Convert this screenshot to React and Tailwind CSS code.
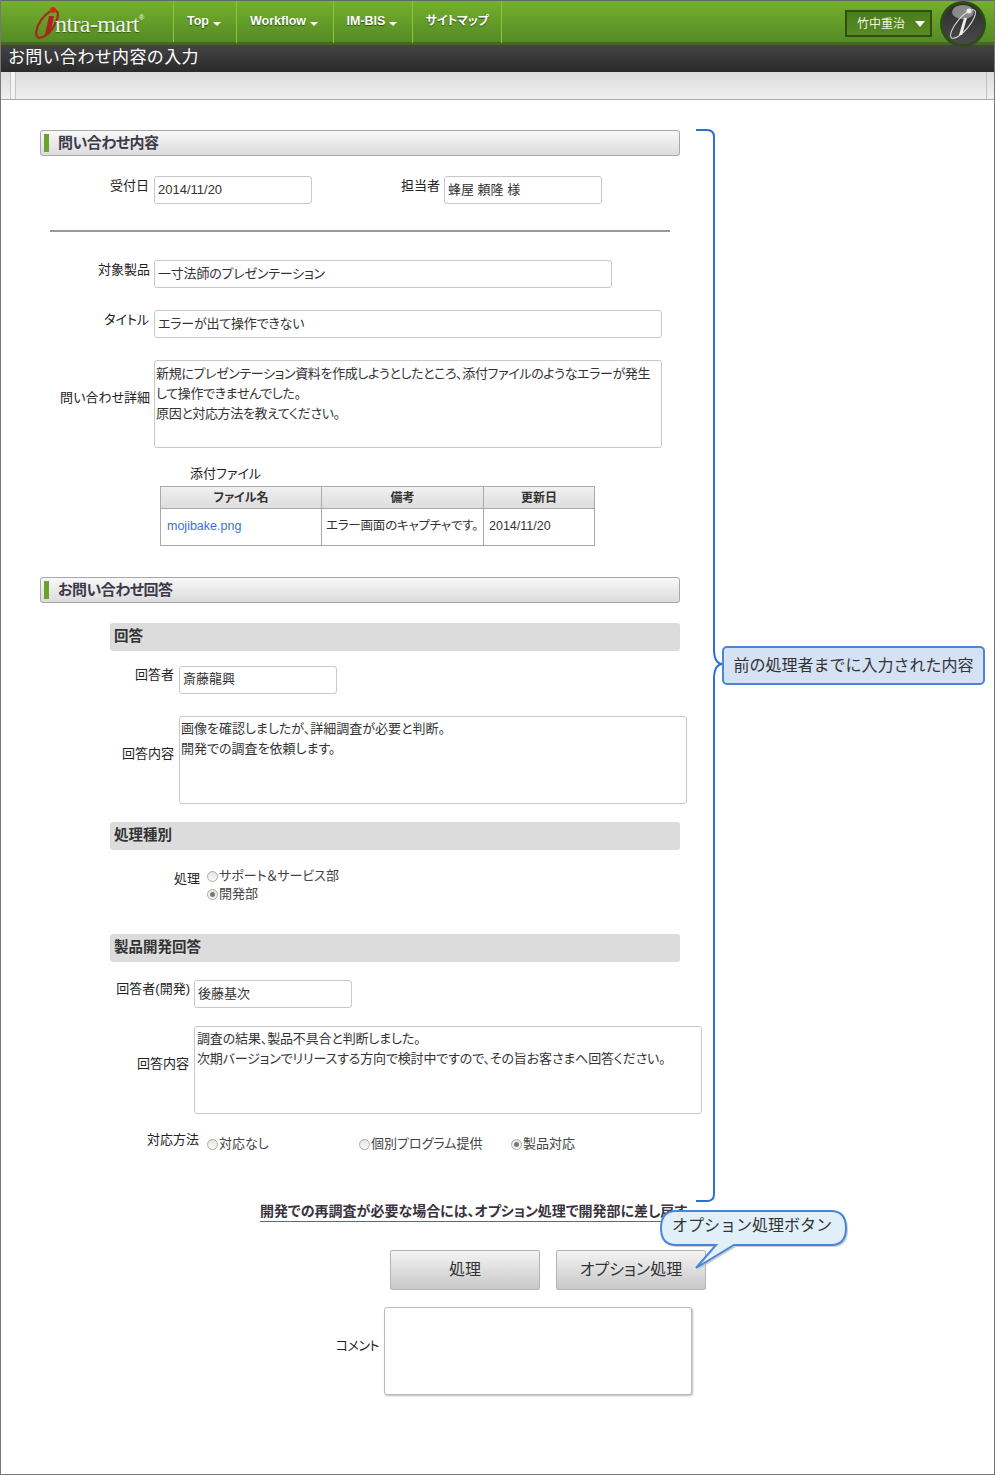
const jp = { fontFamily: '"Liberation Sans","Noto Sans CJK JP",sans-serif' };

function Field({ className = "", children }) {
  return (
    <div className={"border border-[#c8c8c8] rounded-[3px] bg-white text-[13px] leading-[20px] text-[#333] " + className}>
      {children}
    </div>
  );
}

function SectionHead({ className = "", children }) {
  return (
    <div className={"ml-[39px] w-[640px] h-[26px] flex items-center border border-[#a8a8a8] rounded-[3px] bg-linear-to-b from-[#f8f8f8] to-[#dcdcdc] " + className}>
      <span className="ml-[3px] w-[5px] h-[18px] bg-[#6aa32a]" />
      <span className="ml-[9px] text-[15px] font-bold text-[#3a3a4a] tracking-[-0.5px]">{children}</span>
    </div>
  );
}

function SubHead({ className = "", children }) {
  return (
    <div className={"ml-[109px] w-[570px] h-[28px] flex items-center pl-[4px] rounded-[3px] bg-[#dcdcdc] text-[14.5px] font-bold text-[#333] " + className}>
      {children}
    </div>
  );
}

function Label({ className = "", children }) {
  return <div className={"text-right text-[13px] leading-[18px] text-[#222] shrink-0 " + className}>{children}</div>;
}

function Radio({ on }) {
  return (
    <span className="inline-flex items-center justify-center w-[11px] h-[11px] rounded-full border border-[#aaa] bg-linear-to-b from-[#e4e4e4] to-[#fafafa] shrink-0">
      {on && <span className="w-[5px] h-[5px] rounded-full bg-[#777]" />}
    </span>
  );
}

function Nav({ w, children, caret = true }) {
  return (
    <div className={"h-[42px] border-r border-[#8cc63f] flex items-start justify-center pt-[13px] pr-[2px] gap-[4px] text-[12.5px] font-bold text-white [text-shadow:0_1px_1px_#2d4a10] " + w}>
      <span className="leading-[15px]">{children}</span>
      {caret && <span className="mt-[8px] w-0 h-0 border-x-[4px] border-x-transparent border-t-[4px] border-t-white" />}
    </div>
  );
}

export default function App() {
  return (
    <div style={jp} className="relative w-[995px] h-[1475px] bg-white overflow-hidden border-x border-b border-[#777] box-border [font-feature-settings:'palt']">
      {/* header */}
      <div className="h-[42px] flex border-t border-[#666] bg-linear-to-b from-[#74b12e] to-[#558a25] -mx-px">
        <div className="relative w-[174px] h-[41px] border-r border-[#8cc63f] shrink-0">
          <svg className="absolute left-[30px] top-[4px]" width="34" height="36" viewBox="0 0 34 36">
            <ellipse cx="17" cy="19" rx="7" ry="16" transform="rotate(35 17 19)" fill="none" stroke="#a8261c" strokeWidth="2.2" />
            <circle cx="23" cy="5" r="3" fill="#d8261c" />
            <path d="M19 11 L15 29 L20 29 L24 11Z" fill="#a8261c" />
          </svg>
          <span className="absolute left-[55px] top-[9px] text-[24px] leading-[28px] text-[#eef2e6] tracking-[-0.6px] [text-shadow:0_1px_1px_#3c5c18]" style={{ fontFamily: '"Liberation Serif",serif' }}>ntra-mart</span>
          <span className="absolute left-[139px] top-[13px] text-[7px] leading-[8px] text-white">®</span>
        </div>
        <Nav w="w-[63px]">Top</Nav>
        <Nav w="w-[97px]">Workflow</Nav>
        <Nav w="w-[79px]">IM-BIS</Nav>
        <Nav w="w-[89px]" caret={false}><span className="text-[12px] tracking-[-0.3px] ml-[2px]">サイトマップ</span></Nav>
        <div className="flex-1" />
        <div className="mt-[9px] mr-[8px] w-[87px] h-[27px] flex items-center justify-end pr-[5px] gap-[10px] border-2 border-[#2f4f10] bg-linear-to-b from-[#4b7d1c] to-[#578a22] text-[12px] text-[#eef5e4]">
          <span>竹中重治</span>
          <span className="w-0 h-0 border-x-[5px] border-x-transparent border-t-[6px] border-t-white" />
        </div>
        <svg className="mr-[9px] mt-0 relative z-10" width="46" height="46" viewBox="0 0 46 46">
          <defs>
            <linearGradient id="ball" x1="0" y1="0" x2="0" y2="1">
              <stop offset="0" stopColor="#2b2b2b" />
              <stop offset="1" stopColor="#4a4a4a" />
            </linearGradient>
          </defs>
          <circle cx="23" cy="23" r="23" fill="#2f4a1a" />
          <circle cx="23" cy="23" r="20" fill="url(#ball)" />
          <ellipse cx="23" cy="11" rx="11" ry="7" fill="#8a8a8a" />
          <ellipse cx="23" cy="23" rx="6" ry="18" transform="rotate(40 23 23)" fill="none" stroke="#ddd" strokeWidth="1" />
          <path d="M24 17 L19 34 L22 34 L27 17Z" fill="#eee" />
          <circle cx="29" cy="10" r="2.5" fill="#eee" />
        </svg>
      </div>
      <div className="h-[3px] bg-[#44691f] -mx-px" />
      <div className="h-[27px] pl-[8px] -mx-px bg-linear-to-b from-[#444] to-[#2a2a2a] text-[17px] leading-[25px] text-white tracking-[0.35px] [font-feature-settings:normal]">お問い合わせ内容の入力</div>
      <div className="h-[28px] -mx-px flex justify-between border-b border-[#aaa] bg-linear-to-b from-[#dcdcdc] to-[#f0f0f0]">
        <div className="ml-[10px] w-[6px] border-x border-[#c4c4c4] bg-[#f4f4f4]" />
        <div className="mr-[8px] w-px bg-[#c0c0c0]" />
      </div>

      {/* form */}
      <SectionHead className="mt-[30px]">問い合わせ内容</SectionHead>

      <div className="mt-[20px] flex">
        <Label className="w-[148px] mt-[1px]">受付日</Label>
        <Field className="ml-[5px] w-[158px] h-[28px] pt-[3px] px-[3px]">2014/11/20</Field>
        <Label className="w-[128px] mt-[1px]">担当者</Label>
        <Field className="ml-[4px] w-[158px] h-[28px] pt-[3px] px-[3px]">蜂屋 頼隆 様</Field>
      </div>
      <div className="mt-[26px] ml-[49px] w-[620px] h-[2px] bg-[#999]" />

      <div className="mt-[28px] flex">
        <Label className="w-[149px] mt-[1px]">対象製品</Label>
        <Field className="ml-[4px] w-[458px] h-[28px] pt-[3px] px-[3px] tracking-[-0.2px]">一寸法師のプレゼンテーション</Field>
      </div>
      <div className="mt-[22px] flex">
        <Label className="w-[148px] mt-[1px]">タイトル</Label>
        <Field className="ml-[5px] w-[508px] h-[28px] pt-[3px] px-[3px] tracking-[-0.2px]">エラーが出て操作できない</Field>
      </div>
      <div className="mt-[22px] flex items-center">
        <Label className="w-[149px] -mt-[13px]">問い合わせ詳細</Label>
        <Field className="ml-[4px] w-[508px] h-[88px] pt-[3px] px-[1px] whitespace-nowrap tracking-[-0.37px]">
          新規にプレゼンテーション資料を作成しようとしたところ、添付ファイルのようなエラーが発生<br />して操作できませんでした。<br />原因と対応方法を教えてください。
        </Field>
      </div>

      <div className="mt-[17px] ml-[189px] text-[13px] leading-[18px] text-[#222]">添付ファイル</div>
      <table className="mt-[3px] ml-[159px] w-[435px] h-[60px] border-collapse table-fixed text-[12.5px] text-[#333]">
        <thead>
          <tr className="h-[22px] bg-linear-to-b from-[#f0f0f0] to-[#dcdcdc] font-bold">
            <th className="w-[161px] border border-[#aaa] font-bold text-[12px]">ファイル名</th>
            <th className="w-[162px] border border-[#aaa] font-bold text-[12px]">備考</th>
            <th className="border border-[#aaa] font-bold text-[12px]">更新日</th>
          </tr>
        </thead>
        <tbody>
          <tr>
            <td className="border border-[#aaa] pl-[6px] pb-[2px] text-[#3b6fd0]">mojibake.png</td>
            <td className="border border-[#aaa] pl-[4px] pb-[2px] whitespace-nowrap tracking-[-0.2px]">エラー画面のキャプチャです。</td>
            <td className="border border-[#aaa] pl-[5px] pb-[2px]">2014/11/20</td>
          </tr>
        </tbody>
      </table>

      <SectionHead className="mt-[31px]">お問い合わせ回答</SectionHead>
      <SubHead className="mt-[20px]">回答</SubHead>

      <div className="mt-[15px] flex">
        <Label className="w-[173px]">回答者</Label>
        <Field className="ml-[5px] w-[158px] h-[28px] pt-[2px] px-[3px]">斎藤龍興</Field>
      </div>
      <div className="mt-[22px] flex items-center">
        <Label className="w-[173px] -mt-[12px]">回答内容</Label>
        <Field className="ml-[5px] w-[508px] h-[88px] pt-[2px] px-[1px]">
          画像を確認しましたが、詳細調査が必要と判断。<br />開発での調査を依頼します。
        </Field>
      </div>

      <SubHead className="mt-[18px]">処理種別</SubHead>
      <div className="mt-[17px] flex h-[67px]">
        <Label className="w-[199px] mt-[3px]">処理</Label>
        <div className="ml-[7px] text-[13px] leading-[18px] text-[#444]">
          <div className="flex items-center gap-[1px]"><Radio /><span>サポート＆サービス部</span></div>
          <div className="flex items-center gap-[1px]"><Radio on /><span>開発部</span></div>
        </div>
      </div>

      <SubHead>製品開発回答</SubHead>
      <div className="mt-[18px] flex">
        <Label className="w-[189px]">回答者(開発)</Label>
        <Field className="ml-[4px] w-[158px] h-[28px] pt-[3px] px-[3px]">後藤基次</Field>
      </div>
      <div className="mt-[18px] flex items-center">
        <Label className="w-[188px] -mt-[12px]">回答内容</Label>
        <Field className="ml-[5px] w-[508px] h-[88px] pt-[2px] px-[2px] whitespace-nowrap tracking-[-0.15px]">
          調査の結果、製品不具合と判断しました。<br />次期バージョンでリリースする方向で検討中ですので、その旨お客さまへ回答ください。
        </Field>
      </div>

      <div className="mt-[16px] flex h-[28px] text-[13px] leading-[18px] text-[#444]">
        <Label className="w-[198px] mt-[1px]">対応方法</Label>
        <div className="ml-[8px] mt-[5px] w-[152px] flex items-center h-[18px] gap-[1px]"><Radio /><span>対応なし</span></div>
        <div className="mt-[5px] w-[152px] flex items-center h-[18px] gap-[1px]"><Radio /><span>個別プログラム提供</span></div>
        <div className="mt-[5px] flex items-center h-[18px] gap-[1px]"><Radio on /><span>製品対応</span></div>
      </div>

      <div className="mt-[43px] ml-[259px] w-[433px] h-[21px] border-b border-[#5b7a2e] overflow-hidden whitespace-nowrap text-[14px] leading-[20px] font-bold text-[#3a3340]">
        開発での再調査が必要な場合には、オプション処理で開発部に差し戻す
      </div>

      <div className="mt-[28px] ml-[389px] flex gap-[16px]">
        <div className="w-[150px] h-[40px] flex items-center justify-center rounded-[2px] border border-[#b4b4b4] bg-linear-to-b from-[#f4f4f4] to-[#c8c8c8] text-[16px] text-[#333]">処理</div>
        <div className="w-[150px] h-[40px] flex items-center justify-center rounded-[2px] border border-[#b4b4b4] bg-linear-to-b from-[#f4f4f4] to-[#c8c8c8] text-[16px] text-[#333]">オプション処理</div>
      </div>

      <div className="mt-[17px] flex items-center">
        <Label className="w-[378px] -mt-[11px] text-[11px] tracking-[-0.5px]">コメント</Label>
        <div className="ml-[5px] w-[308px] h-[88px] rounded-[3px] border border-[#bbb] bg-white shadow-[1px_1px_2px_#bbb]" />
      </div>

      {/* annotation: bracket */}
      <svg className="absolute left-[691px] top-[126px]" width="36" height="1082" viewBox="0 0 36 1082" fill="none">
        <path d="M4 4 H15 Q22 4 22 11 V523 Q22 538 31 538 Q22 538 22 553 V1068 Q22 1075 15 1075 H4" stroke="#2f6fd0" strokeWidth="2" />
      </svg>
      <div className="absolute left-[721px] top-[646px] w-[263px] h-[39px] flex items-center justify-center rounded-[5px] border-2 border-[#4a86d8] bg-[#d5e1f4] text-[16px] text-[#333] [font-feature-settings:normal]">
        前の処理者までに入力された内容
      </div>

      {/* annotation: tooltip */}
      <svg className="absolute left-[655px] top-[1207px]" width="200" height="70" viewBox="0 0 200 70" fill="none">
        <path d="M20 4 H175 Q190 4 190 21 Q190 38 175 38 H78 L40 61 L60 38 H20 Q5 38 5 21 Q5 4 20 4Z" fill="#bbb" transform="translate(2 2)" opacity="0.7" />
        <path d="M20 4 H175 Q190 4 190 21 Q190 38 175 38 H78 L40 61 L60 38 H20 Q5 38 5 21 Q5 4 20 4Z" fill="#e0eff8" stroke="#4a86d8" strokeWidth="2" />
      </svg>
      <span className="absolute left-[671px] top-[1214px] text-[16px] leading-[24px] text-[#333] whitespace-nowrap [font-feature-settings:normal]">オプション処理ボタン</span>
    </div>
  );
}
